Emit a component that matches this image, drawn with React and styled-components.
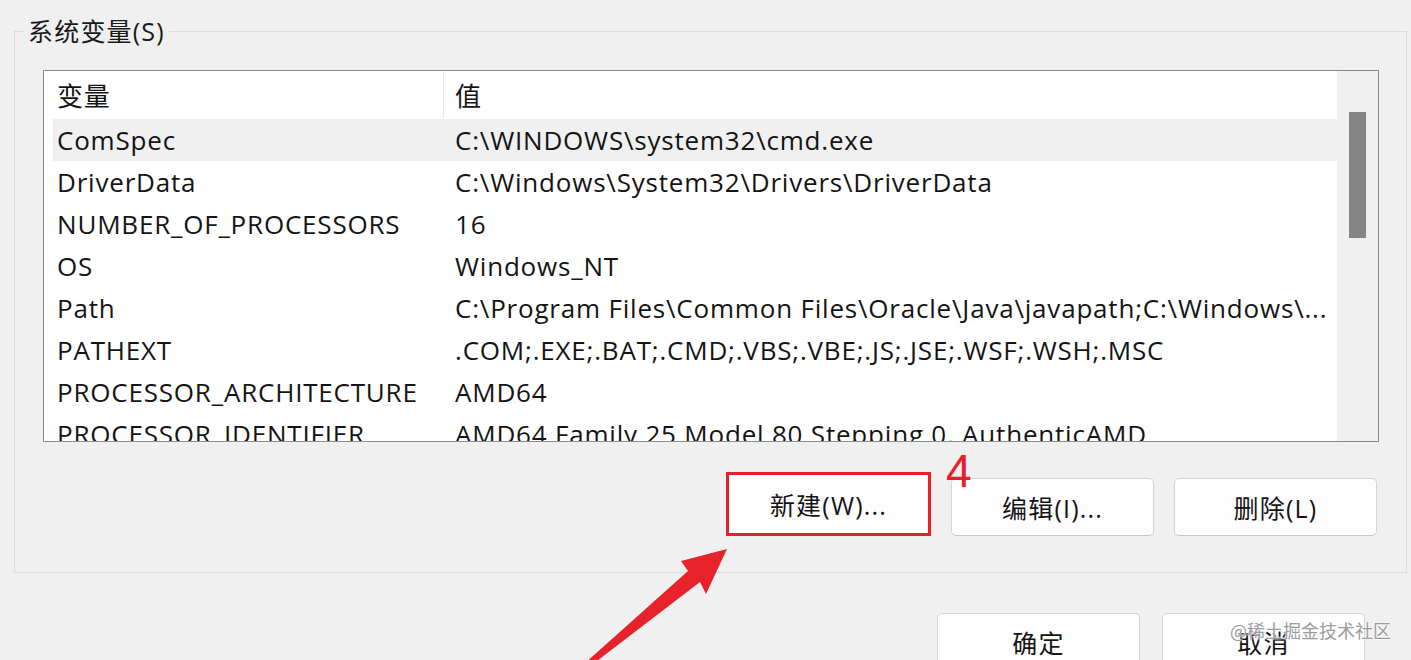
import styled, { createGlobalStyle } from "styled-components"

const GlobalStyle = createGlobalStyle`
    html, body {
        margin: 0;
        padding: 0;
        background: #f0f0f0;
        overflow: hidden;
    }
    body {
        font-family: "Open Sans", "Noto Sans CJK SC", sans-serif;
        color: #141414;
    }
`

const Janela = styled.div`
    position: relative;
    width: 1411px;
    height: 660px;
    overflow: hidden;
    background: #f0f0f0;
    padding: 14px 0 0 14px;
    box-sizing: border-box;
`

const Grupo = styled.fieldset`
    width: 1393px;
    height: 559px;
    box-sizing: border-box;
    margin: 0;
    padding: 0 27px 36px 28px;
    border: 1px solid #dcdcdc;
    display: flex;
    flex-direction: column;
`

const Legenda = styled.legend`
    margin-left: -19px;
    padding: 0 4px;
    font-size: 25px;
    letter-spacing: 1.2px;
    line-height: 34px;
    color: #1a1a1a;
`

const Lista = styled.div`
    margin-top: 22px;
    height: 372px;
    box-sizing: border-box;
    border: 1px solid #8c8c8c;
    background: #fff;
    display: flex;
    overflow: hidden;
`

const Tabela = styled.div`
    flex: 1;
    padding-left: 9px;
    overflow: hidden;
`

const Linha = styled.div`
    display: grid;
    grid-template-columns: 391px 1fr;
    height: ${(p) => (p.cabecalho ? 48 : 42)}px;
    align-items: center;
    font-size: 26px;
    letter-spacing: 0.8px;
    white-space: nowrap;
    background: ${(p) => (p.selecionada ? "#f0f0f0" : "transparent")};
    ${(p) => p.cabecalho && "margin-left: -9px; padding-left: 9px;"}
`

const Celula = styled.div`
    padding-left: ${(p) => (p.segunda ? 11 : 4)}px;
    height: 100%;
    display: flex;
    align-items: center;
    overflow: hidden;
    ${(p) => p.divisoria && "border-right: 1px solid #e8e8e8; height: 46px;"}
`

const Rolagem = styled.div`
    width: 41px;
    background: #f0f0f0;
    padding: 41px 11px 0 12px;
    box-sizing: border-box;
`

const Polegar = styled.div`
    width: 17px;
    height: 126px;
    background: #858585;
`

const LinhaBotoes = styled.div`
    margin-top: auto;
    margin-right: 2px;
    display: flex;
    justify-content: flex-end;
    align-items: flex-end;
    gap: 20px;
    position: relative;
`

const Botao = styled.button`
    width: ${(p) => (p.destaque ? 205 : 203)}px;
    height: ${(p) => (p.destaque ? 64 : 58)}px;
    box-sizing: border-box;
    background: #fdfdfd;
    border: ${(p) => (p.destaque ? "3px solid #e5202a" : "1px solid #d4d4d4")};
    border-bottom-color: ${(p) => (p.destaque ? "#e5202a" : "#c6c6c6")};
    border-radius: ${(p) => (p.destaque ? 0 : 5)}px;
    font-family: "Open Sans", "Noto Sans CJK SC", sans-serif;
    font-size: 25px;
    letter-spacing: 1.2px;
    color: #141414;
    padding: 0;
`

const Numero = styled.span`
    position: absolute;
    left: 903px;
    top: -24px;
    font-family: "Liberation Sans", sans-serif;
    font-size: 46px;
    font-weight: 300;
    color: #e5202a;
    line-height: 1;
`

const Rodape = styled.div`
    display: flex;
    justify-content: flex-end;
    gap: 22px;
    padding: 40px 46px 0 0;
`

const MarcaDagua = styled.span`
    position: absolute;
    right: 20px;
    top: 617px;
    font-family: "Noto Sans CJK SC", sans-serif;
    font-size: 18px;
    color: #9c9c9c;
    text-shadow: 0 0 2px #fff, 0 0 2px #fff;
`

const Seta = styled.svg`
    position: absolute;
    left: 0;
    top: 0;
    pointer-events: none;
`

const variaveis = [
    ["ComSpec", "C:\\WINDOWS\\system32\\cmd.exe"],
    ["DriverData", "C:\\Windows\\System32\\Drivers\\DriverData"],
    ["NUMBER_OF_PROCESSORS", "16"],
    ["OS", "Windows_NT"],
    ["Path", "C:\\Program Files\\Common Files\\Oracle\\Java\\javapath;C:\\Windows\\..."],
    ["PATHEXT", ".COM;.EXE;.BAT;.CMD;.VBS;.VBE;.JS;.JSE;.WSF;.WSH;.MSC"],
    ["PROCESSOR_ARCHITECTURE", "AMD64"],
    ["PROCESSOR_IDENTIFIER", "AMD64 Family 25 Model 80 Stepping 0, AuthenticAMD"],
]

const App = () => {
    return (
        <>
            <GlobalStyle />
            <Janela>
                <Grupo>
                    <Legenda>系统变量(S)</Legenda>
                    <Lista>
                        <Tabela>
                            <Linha cabecalho>
                                <Celula divisoria>变量</Celula>
                                <Celula segunda>值</Celula>
                            </Linha>
                            {variaveis.map(([nome, valor], i) => (
                                <Linha key={nome} selecionada={i === 0}>
                                    <Celula>{nome}</Celula>
                                    <Celula segunda>{valor}</Celula>
                                </Linha>
                            ))}
                        </Tabela>
                        <Rolagem>
                            <Polegar />
                        </Rolagem>
                    </Lista>
                    <LinhaBotoes>
                        <Numero>4</Numero>
                        <Botao destaque>新建(W)...</Botao>
                        <Botao>编辑(I)...</Botao>
                        <Botao>删除(L)</Botao>
                    </LinhaBotoes>
                </Grupo>
                <Rodape>
                    <Botao>确定</Botao>
                    <Botao>取消</Botao>
                </Rodape>
                <MarcaDagua>@稀土掘金技术社区</MarcaDagua>
                <Seta width="1411" height="660" viewBox="0 0 1411 660">
                    <polygon
                        points="584,664 688,571 681,561 727,549 706,594 700,582 593,664"
                        fill="#e8222b"
                    />
                </Seta>
            </Janela>
        </>
    )
}

export default App
